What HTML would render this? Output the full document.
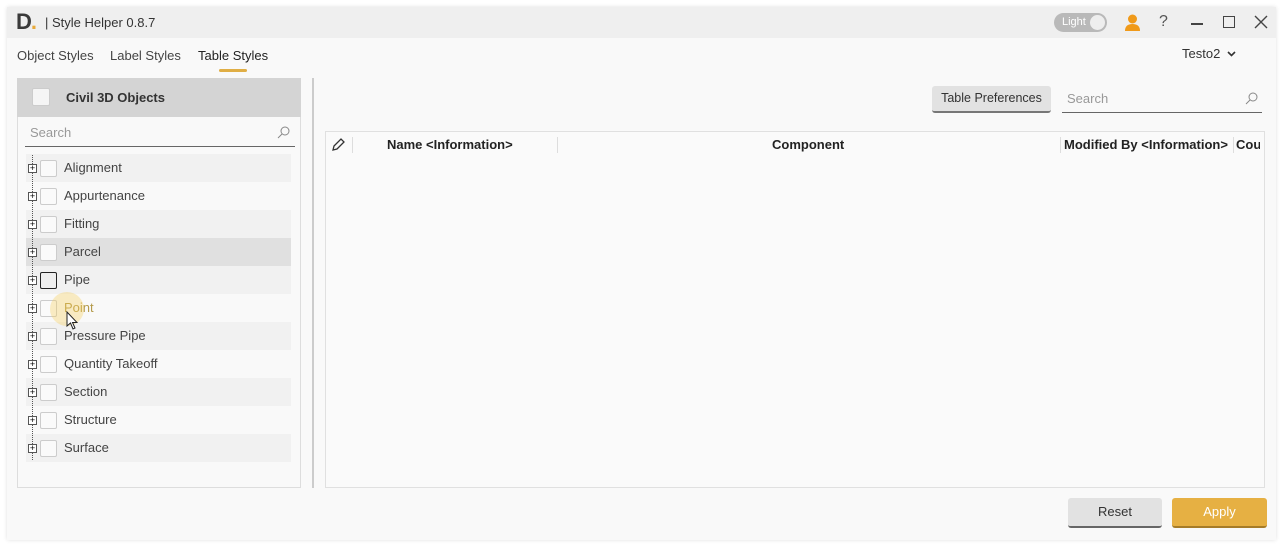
<!DOCTYPE html>
<html><head><meta charset="utf-8"><style>
*{box-sizing:border-box;margin:0;padding:0}
body{width:1284px;height:546px;background:#fff;font-family:"Liberation Sans",sans-serif;color:#333;position:relative;overflow:hidden}
.win{position:absolute;left:7px;top:7px;width:1269px;height:533px;background:#f9f9f9;box-shadow:0 0 4px rgba(0,0,0,.12)}
.title{position:absolute;left:0;top:0;width:100%;height:31px;background:#efefef}
.a{position:absolute}
.row{position:absolute;left:26px;width:265px;height:28px}
.row .cb{position:absolute;left:14px;top:6px;width:17px;height:17px;border:1px solid #ccc;background:#fafafa;border-radius:2px}
.row .pl{position:absolute;left:2px;top:10px;width:9px;height:9px;border:1px solid #555;background:#fff;font-size:9px;line-height:7px;text-align:center;color:#000;z-index:2}
.row span{position:absolute;left:38px;top:6px;font-size:13px;color:#444}
</style></head><body>
<div class="win">
 <div class="title">
  <div class="a" style="left:9px;top:2px;font-size:22px;font-weight:bold;color:#3a3a3a;letter-spacing:-1px">D<span style="color:#e8a93a">.</span></div>
  <div class="a" style="left:38px;top:8px;font-size:13px;color:#333">| Style Helper 0.8.7</div>
  <div class="a" style="left:1047px;top:6px;width:53px;height:19px;border-radius:10px;background:#b9b9b9"><span class="a" style="left:8px;top:3px;font-size:11px;color:#fff">Light</span><div class="a" style="right:2px;top:2px;width:15px;height:15px;border-radius:50%;background:#eee"></div></div>
  <svg class="a" style="left:1117px;top:7px" width="17" height="17"><circle cx="8.5" cy="5" r="4.5" fill="#f09a1a"/><path d="M1 17 Q1 10 8.5 10 Q16 10 16 17Z" fill="#f09a1a"/></svg>
  <div class="a" style="left:1152px;top:6px;font-size:16px;color:#555">?</div>
  <div class="a" style="left:1184px;top:16px;width:12px;height:1.5px;background:#444"></div>
  <div class="a" style="left:1216px;top:9px;width:12px;height:12px;border:1.5px solid #444"></div>
  <svg class="a" style="left:1247px;top:8px" width="14" height="14"><path d="M1 1L13 13M13 1L1 13" stroke="#444" stroke-width="1.4"/></svg>
 </div>
 <div class="a" style="left:10px;top:41px;font-size:13px;color:#444">Object Styles</div>
 <div class="a" style="left:103px;top:41px;font-size:13px;color:#444">Label Styles</div>
 <div class="a" style="left:191px;top:41px;font-size:13px;color:#222">Table Styles</div>
 <div class="a" style="left:212px;top:62px;width:28px;height:3px;background:#e0ae45;border-radius:2px"></div>
 <div class="a" style="left:1175px;top:39px;font-size:13px;color:#333">Testo2</div>
 <svg class="a" style="left:1220px;top:44px" width="9" height="6"><path d="M1 1L4.5 4.5L8 1" fill="none" stroke="#333" stroke-width="1.6"/></svg>
</div>
<!-- left panel -->
<div class="a" style="left:17px;top:78px;width:284px;height:410px;border:1px solid #ddd;background:#f9f9f9"></div>
<div class="a" style="left:17px;top:78px;width:284px;height:39px;background:#d4d4d4"></div>
<div class="a" style="left:32px;top:88px;width:18px;height:18px;border:1px solid #ccc;background:#f5f5f5;border-radius:2px"></div>
<div class="a" style="left:66px;top:90px;font-size:13px;font-weight:bold;color:#333">Civil 3D Objects</div>
<div class="a" style="left:30px;top:125px;font-size:13px;color:#999">Search</div>
<svg class="a" style="left:277px;top:126px" width="13" height="13"><circle cx="8" cy="5" r="4" fill="none" stroke="#888"/><path d="M5 8L1 12" stroke="#888"/></svg>
<div class="a" style="left:25px;top:146px;width:270px;height:1px;background:#666"></div>

<div class="row" style="top:154px;background:#f1f1f1"><div class="pl">+</div><div class="cb"></div><span>Alignment</span></div>
<div class="row" style="top:182px"><div class="pl">+</div><div class="cb"></div><span>Appurtenance</span></div>
<div class="row" style="top:210px;background:#f1f1f1"><div class="pl">+</div><div class="cb"></div><span>Fitting</span></div>
<div class="row" style="top:238px;background:#e0e0e0"><div class="pl">+</div><div class="cb"></div><span>Parcel</span></div>
<div class="row" style="top:266px;background:#f1f1f1"><div class="pl">+</div><div class="cb" style="border-color:#222;background:#eee"></div><span>Pipe</span></div>
<div class="row" style="top:294px"><div class="pl">+</div><div class="cb"></div><span style="color:#b49a4a">Point</span></div>
<div class="row" style="top:322px;background:#f1f1f1"><div class="pl">+</div><div class="cb"></div><span>Pressure Pipe</span></div>
<div class="row" style="top:350px"><div class="pl">+</div><div class="cb"></div><span>Quantity Takeoff</span></div>
<div class="row" style="top:378px;background:#f1f1f1"><div class="pl">+</div><div class="cb"></div><span>Section</span></div>
<div class="row" style="top:406px"><div class="pl">+</div><div class="cb"></div><span>Structure</span></div>
<div class="row" style="top:434px;background:#f1f1f1"><div class="pl">+</div><div class="cb"></div><span>Surface</span></div>
<div class="a" style="left:32px;top:155px;height:305px;border-left:1px dotted #555"></div>
<div class="a" style="left:50px;top:292px;width:34px;height:34px;border-radius:50%;background:rgba(245,205,90,.35)"></div>
<svg class="a" style="left:66px;top:311px" width="12" height="19"><path d="M1 1L1 15L4.5 12L7 18L9 17L6.5 11.5L11 11.5Z" fill="#fff" stroke="#222" stroke-width="1"/></svg>

<div class="a" style="left:312px;top:78px;width:2px;height:410px;background:#ccc"></div>
<!-- right -->
<div class="a" style="left:932px;top:86px;width:119px;height:27px;background:#e2e2e2;border-radius:3px;border-bottom:2px solid #777;font-size:12.5px;color:#333;text-align:center;line-height:25px">Table Preferences</div>
<div class="a" style="left:1067px;top:91px;font-size:13px;color:#999">Search</div>
<svg class="a" style="left:1245px;top:92px" width="13" height="13"><circle cx="8" cy="5" r="4" fill="none" stroke="#888"/><path d="M5 8L1 12" stroke="#888"/></svg>
<div class="a" style="left:1062px;top:112px;width:200px;height:1px;background:#666"></div>
<div class="a" style="left:325px;top:131px;width:940px;height:357px;border:1px solid #e0e0e0;background:#fafafa"></div>
<svg class="a" style="left:331px;top:138px" width="14" height="14"><path d="M2 12L3 8L10 1L13 4L6 11Z" fill="none" stroke="#333" stroke-width="1.3"/></svg>
<div class="a" style="left:352px;top:137px;width:1px;height:16px;background:#ddd"></div>
<div class="a" style="left:387px;top:137px;font-size:13px;font-weight:bold;color:#222">Name &lt;Information&gt;</div>
<div class="a" style="left:557px;top:137px;width:1px;height:16px;background:#ddd"></div>
<div class="a" style="left:772px;top:137px;font-size:13px;font-weight:bold;color:#222">Component</div>
<div class="a" style="left:1064px;top:137px;font-size:13px;font-weight:bold;color:#222">Modified By &lt;Information&gt;</div>
<div class="a" style="left:1060px;top:137px;width:1px;height:16px;background:#ddd"></div>
<div class="a" style="left:1233px;top:137px;width:1px;height:16px;background:#ddd"></div>
<div class="a" style="left:1236px;top:137px;width:24px;overflow:hidden;font-size:13px;font-weight:bold;color:#222;white-space:nowrap">Count</div>
<div class="a" style="left:1068px;top:498px;width:94px;height:30px;background:#e2e2e2;border-radius:3px;border-bottom:2px solid #666;font-size:13px;text-align:center;line-height:28px;color:#333">Reset</div>
<div class="a" style="left:1172px;top:498px;width:95px;height:30px;background:#e6b043;border-radius:3px;border-bottom:2px solid #a67c28;font-size:13px;text-align:center;line-height:28px;color:#fff">Apply</div>
</body></html>
